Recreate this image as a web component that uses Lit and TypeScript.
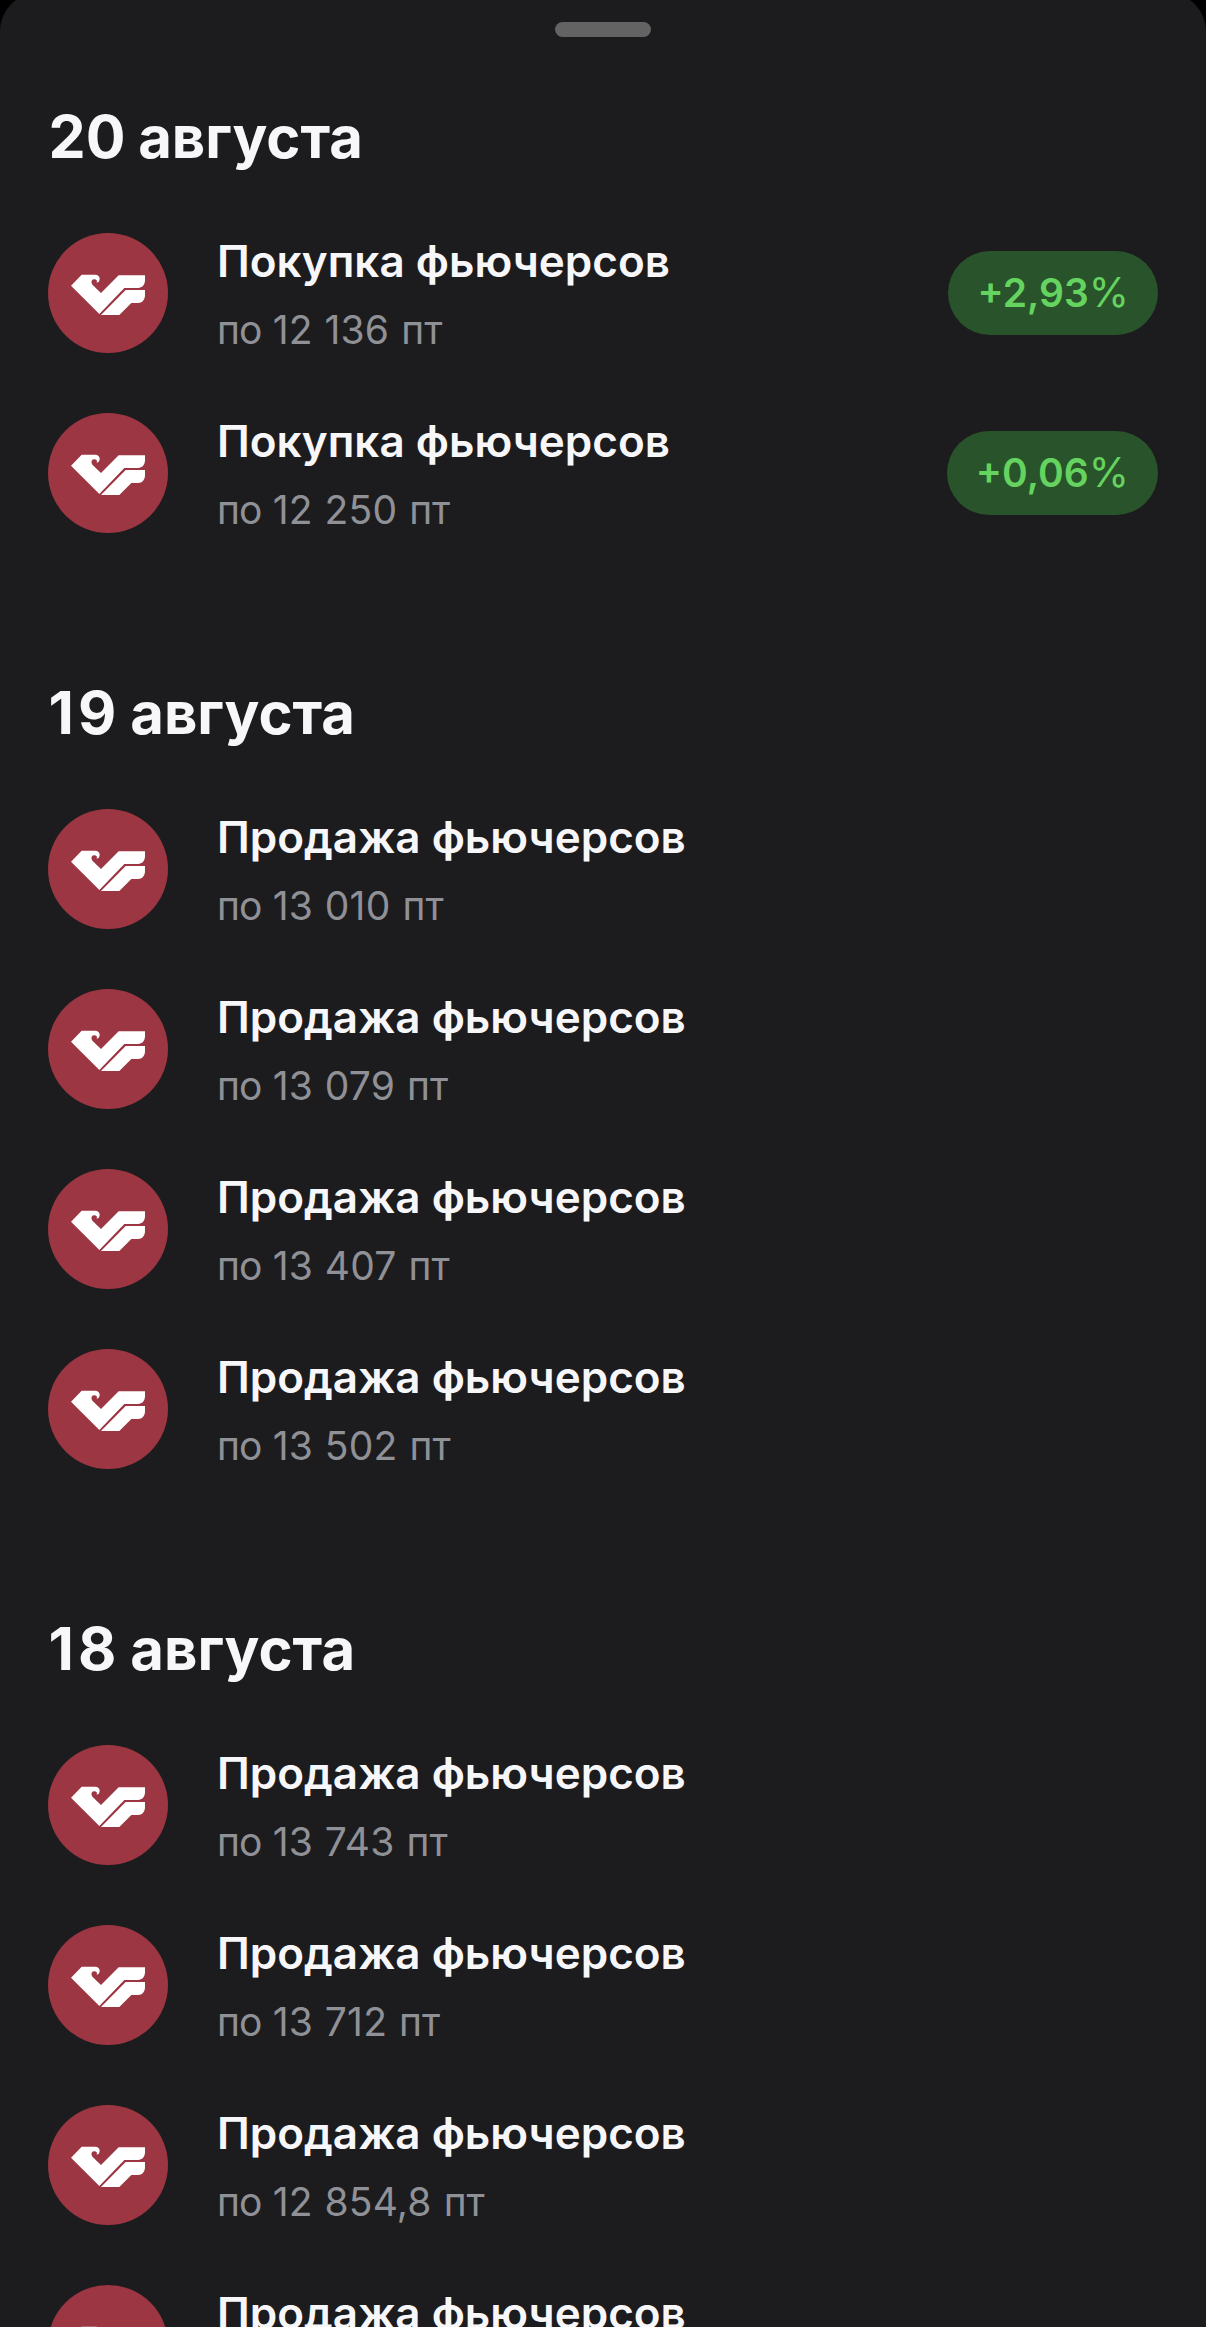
import { LitElement, html, css, nothing } from "lit";
import { customElement, property } from "lit/decorators.js";
import { classMap } from "lit/directives/class-map.js";

interface Operation {
  title: string;
  price?: string;
  change?: string;
}

interface Day {
  day: string;
  month: string;
  operations: Operation[];
}

const BUY = "Покупка фьючерсов";
const SELL = "Продажа фьючерсов";

const DAYS: Day[] = [
  {
    day: "20",
    month: "августа",
    operations: [
      { title: BUY, price: "12 136", change: "+2,93" },
      { title: BUY, price: "12 250", change: "+0,06" },
    ],
  },
  {
    day: "19",
    month: "августа",
    operations: [
      { title: SELL, price: "13 010" },
      { title: SELL, price: "13 079" },
      { title: SELL, price: "13 407" },
      { title: SELL, price: "13 502" },
    ],
  },
  {
    day: "18",
    month: "августа",
    operations: [
      { title: SELL, price: "13 743" },
      { title: SELL, price: "13 712" },
      { title: SELL, price: "12 854,8" },
      { title: SELL },
    ],
  },
];

@customElement("operation-row")
class OperationRow extends LitElement {
  @property({ attribute: false }) operation!: Operation;

  static styles = css`
    :host {
      display: flex;
      align-items: center;
      height: 120px;
    }
    .logo {
      flex: none;
      width: 120px;
      height: 120px;
      margin-right: 49px;
    }
    .text {
      flex: 1;
      align-self: flex-start;
      display: flex;
      flex-direction: column;
      gap: 18px;
      padding-top: 1px;
      white-space: nowrap;
    }
    .title {
      font-size: 44px;
      line-height: 54px;
      font-weight: 600;
      color: #f7f7fa;
    }
    .price {
      font-size: 39px;
      line-height: 48px;
      color: #909197;
    }
    .preposition {
      letter-spacing: -1px;
    }
    .amount {
      margin: 0 1px 0 0.5px;
      letter-spacing: 0.2px;
      word-spacing: 0.5px;
    }
    .badge {
      box-sizing: border-box;
      height: 84px;
      padding: 0 29px;
      border-radius: 42px;
      background: #29532a;
      color: #65d35f;
      font-size: 39px;
      line-height: 84px;
      font-weight: 600;
      white-space: nowrap;
    }
    .percent {
      font-size: 41px;
      font-weight: 400;
      line-height: 1;
    }
  `;

  render() {
    const { title, price, change } = this.operation;
    return html`
      <svg class="logo" viewBox="-51 -96 360 360" aria-hidden="true">
        <circle cx="129" cy="84" r="180" fill="#9b3642" />
        <path
          fill="#fff"
          d="M18 62 L50 29 H91 C99 29 104 34 104 41 C104 48 101 52 95 53 C98 47 94 43 88 43 C81 43 78 49 80 55 C82 61 88 64 108 84 L161 31 H240 V46 C240 59 232 69 219 69 H178 L103 147 Z"
        />
        <path
          fill="#fff"
          d="M182 75 H240 V90 C240 104 232 114 219 114 H199 L163 150 H108 Z"
        />
      </svg>
      <div class="text">
        <div class="title">${title}</div>
        ${price
          ? html`<div class="price"><span class="preposition">по</span> <span class="amount">${price}</span> пт</div>`
          : nothing}
      </div>
      ${change
        ? html`<div class="badge">${change}<span class="percent">%</span></div>`
        : nothing}
    `;
  }
}

@customElement("app-root")
class AppRoot extends LitElement {
  static styles = css`
    :host {
      display: block;
      height: 2327px;
      overflow: hidden;
      background: #000;
      font-family: Inter, "Liberation Sans", sans-serif;
    }
    .sheet {
      box-sizing: border-box;
      height: 2334px;
      margin-top: -7px;
      padding: 29px 48px 0;
      border-radius: 38px 38px 0 0;
      background: #1c1c1e;
      overflow: hidden;
    }
    .handle {
      width: 96px;
      height: 15px;
      margin: 0 auto 64px;
      border-radius: 7.5px;
      background: #636364;
    }
    .day {
      margin-bottom: 144px;
    }
    .date {
      margin: 0 0 60px;
      padding-left: 0.5px;
      font-size: 59px;
      line-height: 72px;
      font-weight: 700;
      color: #f7f7fa;
    }
    .number {
      margin-right: -1.3px;
    }
    .number.teen {
      letter-spacing: 4px;
      margin-right: -4px;
    }
    .month {
      font-size: 58px;
      line-height: 1;
    }
    .list {
      display: flex;
      flex-direction: column;
      gap: 60px;
    }
  `;

  render() {
    return html`
      <main class="sheet">
        <div class="handle"></div>
        ${DAYS.map(
          ({ day, month, operations }) => html`
            <section class="day">
              <h2 class="date"><span class=${classMap({ number: true, teen: day.startsWith("1") })}>${day}</span> <span class="month">${month}</span></h2>
              <div class="list">
                ${operations.map(
                  (op) => html`<operation-row .operation=${op}></operation-row>`
                )}
              </div>
            </section>
          `
        )}
      </main>
    `;
  }
}
